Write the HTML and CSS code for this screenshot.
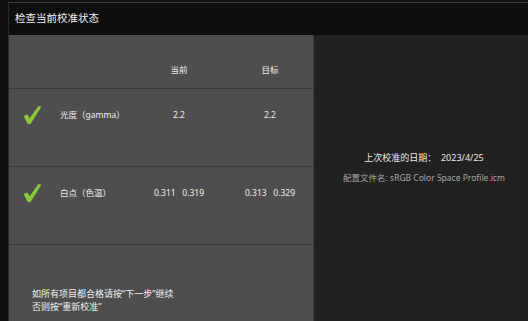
FILE: index.html
```html
<!DOCTYPE html>
<html lang="zh-cn">
<head>
    <meta charset="utf-8">
    <title>检查当前校准状态</title>
    <link rel="stylesheet" href="styles.css">
</head>
<body>
    <div id="window">
        <div class="title">检查当前校准状态</div>
        <div class="main">
            <div class="panel">
                <div class="row head">
                    <div></div>
                    <div></div>
                    <div class="val">当前</div>
                    <div class="val target">目标</div>
                </div>
                <div class="row item">
                    <div class="icon">
                        <svg width="20" height="20" viewBox="0 0 20 20"><path d="M1.5 10.8 L5.6 9.6 L7.6 13.2 L16.4 1 L19.4 1.8 L8.6 19 L5.6 19 Z" fill="#8cc63c"/></svg>
                    </div>
                    <div class="label">光度（gamma）</div>
                    <div class="val">2.2</div>
                    <div class="val target">2.2</div>
                </div>
                <div class="row item">
                    <div class="icon">
                        <svg width="20" height="20" viewBox="0 0 20 20"><path d="M1.5 10.8 L5.6 9.6 L7.6 13.2 L16.4 1 L19.4 1.8 L8.6 19 L5.6 19 Z" fill="#8cc63c"/></svg>
                    </div>
                    <div class="label">白点（色温）</div>
                    <div class="val">0.311&nbsp;&nbsp;&nbsp;0.319</div>
                    <div class="val target">0.313&nbsp;&nbsp;&nbsp;0.329</div>
                </div>
                <div class="note">
                    如所有项目都合格请按“下一步”继续<br>
                    否则按“重新校准”
                </div>
            </div>
            <div class="info">
                <div class="date">上次校准的日期：&nbsp;&nbsp;2023/4/25</div>
                <div class="profile">配置文件名: sRGB Color Space Profile.icm</div>
            </div>
        </div>
    </div>
</body>
</html>
```

FILE: styles.css
```css
body {
    margin: 0;
    padding: 0 0 0 8px;
    background-color: #101010;
    font-family: "Noto Sans", "Noto Sans CJK SC", sans-serif;
    color: #eeeeee;
    height: 321px;
    overflow: hidden;
}
#window {
    margin-top: 2px;
    border-top: 1px solid #3c3c3c;
    border-left: 1px solid #2a2a2a;
    height: 318px;
    display: flex;
    flex-direction: column;
}
.title {
    height: 32px;
    line-height: 31px;
    padding-left: 6px;
    background: #0e0e0e;
    font-size: 10.5px;
    color: #f2f2f2;
}
.main {
    flex: 1;
    display: flex;
}
.panel {
    width: 304px;
    background: #4e4e4f;
    border-right: 1px solid #3a3a3b;
    display: flex;
    flex-direction: column;
}
.row {
    display: grid;
    grid-template-columns: 51px 80px 78px 95px;
    align-items: center;
    border-bottom: 1px solid #3b3b3c;
    font-size: 8.5px;
}
.head {
    height: 53px;
    align-items: end;
}
.head .val {
    padding-bottom: 13px;
}
.item {
    height: 77px;
    align-content: start;
}
.item > div {
    margin-top: 16px;
    height: 20px;
    line-height: 20px;
}
.icon {
    padding-left: 13px;
}
.label {
    color: #f0f0f0;
}
.val {
    text-align: center;
}
.target {
    padding-left: 9px;
}
.note {
    margin-top: 42px;
    padding-left: 23px;
    font-size: 9px;
    line-height: 13px;
    color: #f0f0f0;
}
.info {
    flex: 1;
    background: #212122;
    display: flex;
    flex-direction: column;
    align-items: center;
    padding-top: 116px;
    padding-left: 6px;
    font-size: 8.5px;
}
.date {
    font-size: 9px;
    color: #ececec;
}
.profile {
    margin-top: 7px;
    color: #a6a6a6;
}
```
